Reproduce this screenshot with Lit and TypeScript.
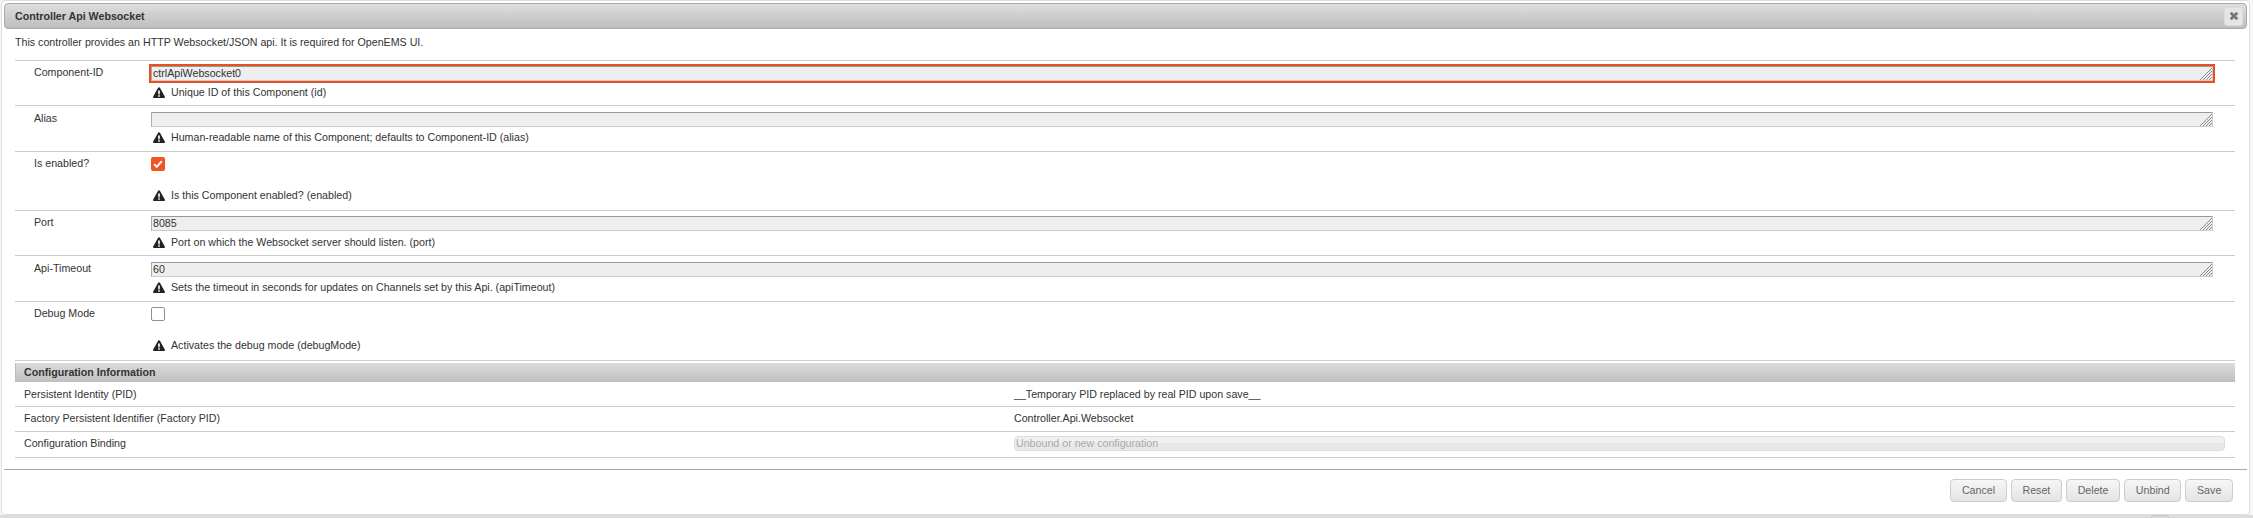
import { LitElement, html, css, svg } from "lit";
import { customElement } from "lit/decorators.js";

const warn = svg`<svg class="warn" viewBox="0 0 12 11" width="12" height="11"><path fill="#222" fill-rule="evenodd" d="M6 0.3c.4 0 .7.2.9.5l4.9 8.7c.4.7-.1 1.5-.9 1.5H1.1c-.8 0-1.3-.8-.9-1.5L5.1.8c.2-.3.5-.5.9-.5zM5.1 3.6l.2 3.9h1.4l.2-3.9zM5.2 8.2v1.5h1.6V8.2z"/></svg>`;

const grip = svg`<svg class="grip" viewBox="0 0 12 12" width="12" height="12"><path d="M12 0L0 12M12 3L3 12M12 6L6 12M12 9L9 12" stroke="#8a8a8a" stroke-width="1" fill="none"/></svg>`;

interface Field {
  label: string;
  kind: "text" | "check";
  value?: string;
  checked?: boolean;
  focus?: boolean;
  help: string;
}

const fields: Field[] = [
  { label: "Component-ID", kind: "text", value: "ctrlApiWebsocket0", focus: true, help: "Unique ID of this Component (id)" },
  { label: "Alias", kind: "text", value: "", help: "Human-readable name of this Component; defaults to Component-ID (alias)" },
  { label: "Is enabled?", kind: "check", checked: true, help: "Is this Component enabled? (enabled)" },
  { label: "Port", kind: "text", value: "8085", help: "Port on which the Websocket server should listen. (port)" },
  { label: "Api-Timeout", kind: "text", value: "60", help: "Sets the timeout in seconds for updates on Channels set by this Api. (apiTimeout)" },
  { label: "Debug Mode", kind: "check", checked: false, help: "Activates the debug mode (debugMode)" },
];

@customElement("app-root")
export class AppRoot extends LitElement {
  static styles = css`
    :host {
      display: block;
      position: relative;
      width: 2253px;
      height: 518px;
      overflow: hidden;
      background: linear-gradient(#f7f7f7 0, #f7f7f7 515px, #dcdcdc 515px);
      font-family: "Liberation Sans", Arial, sans-serif;
      font-size: 10.667px;
      color: #333;
    }
    .dialog {
      box-sizing: border-box;
      margin-left: 1px;
      width: 2249px;
      height: 515px;
      background: #fff;
      border: 1px solid #ddd;
      border-radius: 4px;
      padding: 2px;
      display: flex;
      flex-direction: column;
    }
    .tab {
      position: absolute;
      left: 2151px;
      top: 515px;
      box-sizing: border-box;
      width: 18px;
      height: 4px;
      border: 1px solid #c8c8c8;
      border-bottom: none;
      border-radius: 3px 3px 0 0;
      background: #d8d8d8;
    }
    .title {
      box-sizing: border-box;
      height: 26px;
      flex: none;
      border: 1px solid #aaa;
      border-radius: 4px;
      background: linear-gradient(#dedede, #bdbdbd);
      display: flex;
      align-items: center;
      justify-content: space-between;
      padding: 0 3px 0 10px;
      font-weight: bold;
      color: #333;
    }
    .close {
      box-sizing: border-box;
      width: 19px;
      height: 19px;
      background: #e6e6e6;
      border: 1px solid #ddd;
      border-radius: 3px;
      display: flex;
      align-items: center;
      justify-content: center;
    }
    .body {
      flex: none;
      padding: 0 12px 0 11px;
    }
    .desc {
      box-sizing: border-box;
      height: 31px;
      line-height: 15px;
      padding-top: 6px;
    }
    .rows {
      border-top: 1px solid #ccc;
    }
    .row {
      box-sizing: border-box;
      height: 45.4px;
      border-bottom: 1px solid #ccc;
      display: grid;
      grid-template-columns: 136px 1fr;
    }
    .row.tall { height: 59px; }
    .lab {
      padding: 4.4px 0 0 19px;
      line-height: 15px;
    }
    .ctl {
      padding-top: 5.4px;
      display: flex;
      flex-direction: column;
    }
    .area {
      position: relative;
      width: 2062px;
      height: 15px;
    }
    .grip {
      position: absolute;
      right: 1px;
      bottom: 1px;
      pointer-events: none;
    }
    textarea {
      box-sizing: border-box;
      display: block;
      width: 100%;
      height: 15px;
      margin: 0;
      padding: 0 1px;
      border: 1px solid #ccc;
      border-top-color: #999;
      border-left-color: #aaa;
      border-radius: 0;
      background: #eee;
      color: #333;
      font: 10.667px/13px "Liberation Sans", Arial, sans-serif;
      overflow: hidden;
      outline: none;
      resize: none;
    }
    textarea.focus {
      outline: 2px solid #e8501f;
      outline-offset: 0;
    }
    .help {
      display: flex;
      align-items: center;
      gap: 6px;
      height: 15px;
      margin-top: 3.6px;
      padding-left: 2px;
      line-height: 15px;
    }
    .tall .help { margin-top: 16.6px; }
    .check {
      box-sizing: border-box;
      width: 14px;
      height: 14px;
      border-radius: 2px;
      display: flex;
      align-items: center;
      justify-content: center;
    }
    .check.on { background: #ee5522; }
    .check.off { border: 1px solid #8f8f8f; background: #fff; }
    .section {
      box-sizing: border-box;
      height: 19px;
      margin-top: 2px;
      border-left: 1px solid #bbb;
      background: linear-gradient(#dcdcdc, #bfbfbf);
      font-weight: bold;
      line-height: 18px;
      padding-left: 8px;
    }
    .info {
      display: grid;
      grid-template-columns: 999px 1fr;
      grid-template-rows: 25px 25px 26px;
    }
    .cell {
      box-sizing: border-box;
      border-bottom: 1px solid #ccc;
      padding: 0 0 1px 9px;
      display: flex;
      align-items: center;
    }
    .cell.first { padding-bottom: 0; }
    .cell.last { padding-bottom: 3px; }
    .cell.v { padding-left: 0; }
    .select {
      box-sizing: border-box;
      width: 1211px;
      height: 15px;
      border: 1px solid #ddd;
      border-radius: 4px;
      background: linear-gradient(#f0f0f0 50%, #e8e8e8 50%);
      color: #aaa;
      line-height: 13px;
      padding-left: 1px;
    }
    .foot {
      flex: none;
      box-sizing: border-box;
      margin-top: 11px;
      border-top: 1px solid #aaa;
      padding: 9px 14px 0 0;
      display: flex;
      justify-content: flex-end;
      gap: 4px;
    }
    .btn {
      box-sizing: border-box;
      height: 23px;
      border: 1px solid #ccc;
      border-radius: 4px;
      background: linear-gradient(#f6f6f6, #e4e4e4);
      color: #666;
      font: 10.667px/21px "Liberation Sans", Arial, sans-serif;
      padding: 0 10.7px;
      margin: 0;
    }
  `;

  private field(f: Field) {
    return html`<div class="row ${f.kind === "check" ? "tall" : ""}">
      <div class="lab">${f.label}</div>
      <div class="ctl">
        ${f.kind === "text"
          ? html`<div class="area"><textarea rows="1" class=${f.focus ? "focus" : ""} .value=${f.value ?? ""}></textarea>${grip}</div>`
          : html`<div class="check ${f.checked ? "on" : "off"}">
              ${f.checked
                ? html`<svg viewBox="0 0 14 14" width="14" height="14"><path d="M3.2 7.2l2.6 2.6 5-5.6" fill="none" stroke="#fff" stroke-width="2"/></svg>`
                : ""}
            </div>`}
        <div class="help">${warn}<span>${f.help}</span></div>
      </div>
    </div>`;
  }

  render() {
    return html`<div class="dialog">
        <div class="title">
          <span>Controller Api Websocket</span>
          <div class="close">
            <svg viewBox="0 0 12 12" width="10" height="10"><path d="M2 2l8 8M10 2l-8 8" stroke="#777" stroke-width="3.4" fill="none"/></svg>
          </div>
        </div>
        <div class="body">
          <div class="desc">This controller provides an HTTP Websocket/JSON api. It is required for OpenEMS UI.</div>
          <div class="rows">${fields.map((f) => this.field(f))}</div>
          <div class="section">Configuration Information</div>
          <div class="info">
            <div class="cell first">Persistent Identity (PID)</div><div class="cell v first">__Temporary PID replaced by real PID upon save__</div>
            <div class="cell">Factory Persistent Identifier (Factory PID)</div><div class="cell v">Controller.Api.Websocket</div>
            <div class="cell last">Configuration Binding</div><div class="cell v"><div class="select">Unbound or new configuration</div></div>
          </div>
        </div>
        <div class="foot">
          <button class="btn">Cancel</button><button class="btn">Reset</button><button class="btn">Delete</button><button class="btn">Unbind</button><button class="btn">Save</button>
        </div>
      </div>
      <div class="tab"></div>`;
  }
}
